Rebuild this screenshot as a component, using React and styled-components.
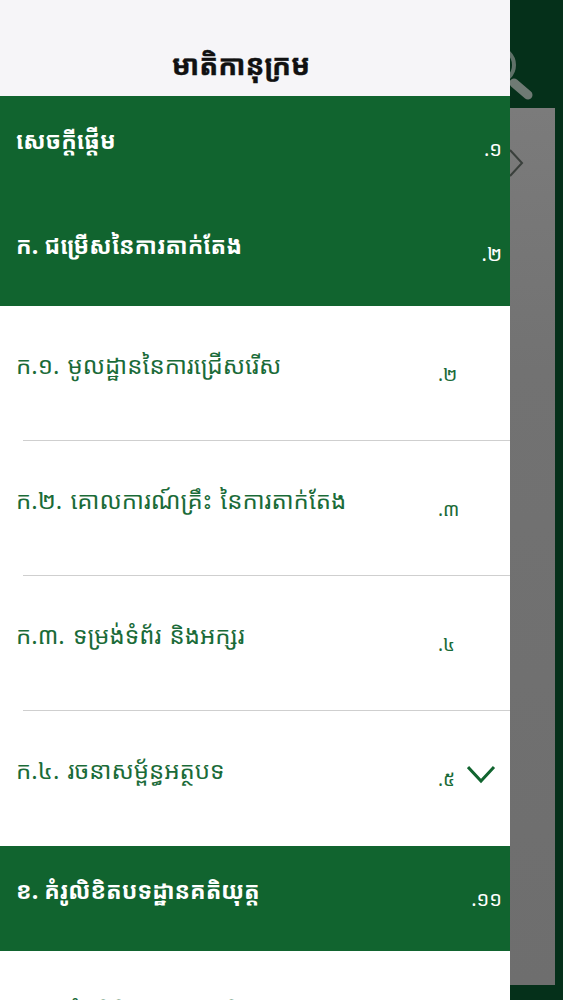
import React from "react";
import styled, { createGlobalStyle } from "styled-components";

const Global = createGlobalStyle`
  html, body { margin: 0; padding: 0; height: 1000px; overflow: hidden; background: #06301a; }
  #root { height: 1000px; }
`;
const K = `"Noto Sans Khmer", "Khmer OS", "DejaVu Sans", "Noto Sans", sans-serif`;

const Page = styled.div`
  position: relative;
  width: 563px;
  height: 1000px;
  overflow: hidden;
  font-family: ${K};
`;
const Backdrop = styled.div`
  height: 1000px;
  padding: 108px 8px 15px 0;
  box-sizing: border-box;
  background: #05301a;
`;
const GrayPanel = styled.div`
  height: 100%;
  background: linear-gradient(180deg, #7b7b7b 0%, #727272 30%, #6e6e6e 100%);
`;
const SearchGlyph = styled.svg`
  position: absolute;
  left: 490px;
  top: 45px;
`;
const PeekChevron = styled.svg`
  position: absolute;
  left: 508px;
  top: 148px;
`;
const Drawer = styled.div`
  position: absolute;
  left: 0;
  top: 0;
  bottom: 0;
  width: 510px;
  background: #fff;
  overflow: hidden;
`;
const Header = styled.div`
  height: 96px;
  box-sizing: border-box;
  background: #f6f5f8;
  display: flex;
  align-items: flex-end;
  justify-content: center;
  padding: 0 28px 12px 0;
  font-size: 28px;
  line-height: 40px;
  font-weight: 700;
  color: #111;
  -webkit-text-stroke: 0.4px #111;
`;
const Section = styled.div`
  height: ${p => p.$h}px;
  box-sizing: border-box;
  display: flex;
  align-items: flex-start;
  padding: ${p => p.$top}px 8px 0 16px;
  background: #11642f;
  color: #fff;
  font-size: 23px;
  line-height: 32px;
  font-weight: 700;
`;
const Item = styled.div`
  height: 135px;
  box-sizing: border-box;
  display: flex;
  align-items: flex-start;
  padding: 42px 0 0 16px;
  color: #1a6b38;
  font-size: 24px;
  line-height: 34px;
  word-spacing: 2px;
  position: relative;
  &::after {
    content: "";
    display: ${p => (p.$last ? "none" : "block")};
    position: absolute;
    left: 23px;
    right: 0;
    bottom: 0;
    height: 1px;
    background: #cfcfcf;
  }
`;
const Label = styled.span`
  flex: 1;
  white-space: nowrap;
`;
const SectionNum = styled.span`
  font-size: 20px;
  font-weight: 400;
  margin-top: 9px;
`;
const ItemNum = styled.span`
  width: 72px;
  font-size: 19px;
  margin-top: 9px;
  flex: none;
`;
const Chevron = styled.svg`
  position: absolute;
  left: 467px;
  top: 54px;
`;

const items = [
  ["ក.១. មូលដ្ឋាននៃការជ្រើសរើស", ".២"],
  ["ក.២. គោលការណ៍គ្រឹះ នៃការតាក់តែង", ".៣"],
  ["ក.៣. ទម្រង់ទំព័រ និងអក្សរ", ".៤"],
  ["ក.៤. រចនាសម្ព័ន្ធអត្ថបទ", ".៥"],
];

export default function App() {
  return (
    <Page>
      <Global />
      <Backdrop><GrayPanel /></Backdrop>
      <SearchGlyph width="50" height="60" viewBox="0 0 50 60" fill="none">
        <circle cx="7" cy="20" r="17" stroke="#5f7168" strokeWidth="4" />
        <path d="M24 38 L38 50" stroke="#6f7a74" strokeWidth="9" strokeLinecap="round" />
      </SearchGlyph>
      <PeekChevron width="18" height="30" viewBox="0 0 18 30" fill="none">
        <path d="M2 2 L14 15 L2 28" stroke="#3a403c" strokeWidth="2" />
      </PeekChevron>
      <Drawer>
        <Header>មាតិកានុក្រម</Header>
        <Section $h={105} $top={28}>
          <Label>សេចក្តីផ្តើម</Label>
          <SectionNum>.១</SectionNum>
        </Section>
        <Section $h={105} $top={28}>
          <Label>ក. ជម្រើសនៃការតាក់តែង</Label>
          <SectionNum>.២</SectionNum>
        </Section>
        {items.map(([t, n], i) => (
          <Item key={t} $last={i === 3}>
            <Label>{t}</Label>
            <ItemNum>{n}</ItemNum>
            {i === 3 && (
              <Chevron width="30" height="20" viewBox="0 0 30 20" fill="none">
                <path d="M1 2 L14 16 L27 2" stroke="#11642f" strokeWidth="3" />
              </Chevron>
            )}
          </Item>
        ))}
        <Section $h={105} $top={28}>
          <Label>ខ. គំរូលិខិតបទដ្ឋានគតិយុត្ត</Label>
          <SectionNum>.១១</SectionNum>
        </Section>
        <Item $last>
          <Label>ខ.១. គំរូលិខិតបទដ្ឋានគតិយុត្ត</Label>
        </Item>
      </Drawer>
    </Page>
  );
}
